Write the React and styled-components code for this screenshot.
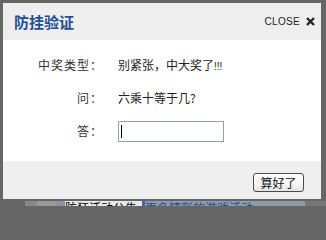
import React from 'react';
import styled, { createGlobalStyle } from 'styled-components';

const GlobalStyle = createGlobalStyle`
  html, body {
    margin: 0;
    padding: 0;
    background: #666;
    font-family: "Noto Sans CJK SC", "Liberation Sans", sans-serif;
    overflow: hidden;
  }
`;

const Screen = styled.div`
  width: 326px;
  height: 206px;
  padding-top: 3px;
  box-sizing: border-box;
  display: flex;
  flex-direction: column;
  overflow: hidden;
`;

const Dialog = styled.div`
  width: 318px;
  margin-left: 3px;
  display: flex;
  flex-direction: column;
`;

const Header = styled.div`
  height: 37px;
  background: #eeeeee;
  display: flex;
  align-items: center;
  justify-content: space-between;
  padding: 0 6px 0 11px;
`;

const Title = styled.h1`
  margin: 0;
  font-size: 15px;
  font-weight: bold;
  color: #1f4f92;
  line-height: 1;
`;

const CloseButton = styled.button`
  border: none;
  background: none;
  padding: 0;
  display: flex;
  align-items: center;
  gap: 6px;
  font-family: "Liberation Sans", sans-serif;
  font-size: 10px;
  letter-spacing: 0.3px;
  color: #222;
  cursor: pointer;
`;

const Body = styled.div`
  height: 121px;
  box-sizing: border-box;
  background: #fff;
  padding-top: 13px;
  display: flex;
  flex-direction: column;
  gap: 11px;
`;

const Row = styled.div`
  height: 22px;
  display: grid;
  grid-template-columns: 100px 1fr;
  column-gap: 15px;
  align-items: center;
  font-size: 12px;
  color: #333;
`;

const Label = styled.span`
  text-align: right;
  letter-spacing: 1px;
`;

const Value = styled.span`
  color: #222;
`;

const Bang = styled.span`
  font-size: 10px;
  font-family: "Liberation Sans", sans-serif;
`;

const InputWrap = styled.div`
  position: relative;
  width: 106px;
  height: 21px;
  margin-top: 2px;
`;

const Answer = styled.input`
  width: 106px;
  height: 21px;
  box-sizing: border-box;
  border: 1px solid #8fa3b3;
  padding: 0 3px;
  outline: none;
  font-size: 12px;
`;

const Caret = styled.span`
  position: absolute;
  left: 3px;
  top: 4px;
  width: 1px;
  height: 13px;
  background: #000;
`;

const Footer = styled.div`
  height: 38px;
  box-sizing: border-box;
  background: #efefef;
  display: flex;
  justify-content: flex-end;
  padding: 12px 17px 0 0;
`;

const SubmitButton = styled.button`
  width: 51px;
  height: 19px;
  box-sizing: border-box;
  border: 1px solid #4a4a4a;
  border-radius: 3px;
  background: linear-gradient(#ffffff, #f4f4f4 60%, #e4e4e4);
  font-family: "Noto Sans CJK SC", sans-serif;
  font-size: 12px;
  color: #111;
  padding: 0;
  line-height: 17px;
`;

// the page behind the dialog, only its top edge shows in the window
const PageStrip = styled.div`
  margin-top: 2px;
  height: 5px;
  overflow: hidden;
  display: flex;
  align-items: flex-start;
  font-size: 12px;
  line-height: 12px;
`;

const Block = styled.div`
  width: ${p => p.w}px;
  height: 5px;
  flex: none;
  background: ${p => p.bg};
  color: ${p => p.fg || '#000'};
  overflow: hidden;
  white-space: nowrap;
  padding-top: 1px;
  box-sizing: border-box;
  font-size: ${p => p.size || 12}px;
`;

const CloseIcon = () => (
  <svg width="9" height="9" viewBox="0 0 9 9">
    <path d="M1 1 L8 8 M8 1 L1 8" stroke="#222" strokeWidth="2.4" />
  </svg>
);

export default function App() {
  return (
    <>
      <GlobalStyle />
      <Screen>
        <Dialog>
          <Header>
            <Title>防挂验证</Title>
            <CloseButton>
              CLOSE
              <CloseIcon />
            </CloseButton>
          </Header>
          <Body>
            <Row>
              <Label>中奖类型：</Label>
              <Value>
                别紧张，中大奖了<Bang>!!!</Bang>
              </Value>
            </Row>
            <Row>
              <Label>问：</Label>
              <Value>六乘十等于几?</Value>
            </Row>
            <Row>
              <Label>答：</Label>
              <InputWrap>
                <Answer type="text" />
                <Caret />
              </InputWrap>
            </Row>
          </Body>
          <Footer>
            <SubmitButton>算好了</SubmitButton>
          </Footer>
        </Dialog>
        <PageStrip>
          <Block w={25} bg="#666" />
          <Block w={12} bg="#888" />
          <Block w={20} bg="#999" />
          <Block w={8} bg="#8a96a8" fg="#2a5ea8" size={7}>▶</Block>
          <Block w={77} bg="#e8e8e8">防狂活动公告</Block>
          <Block w={3} bg="#3b68b0" />
          <Block w={160} bg="#8f9aa8" fg="#1e4f92">更多精彩的游戏活动</Block>
          <Block w={21} bg="#777" />
        </PageStrip>
      </Screen>
    </>
  );
}
